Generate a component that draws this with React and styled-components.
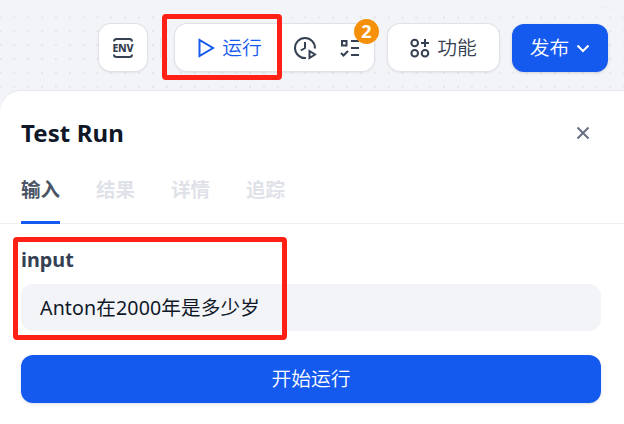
import React from "react";
import styled, { createGlobalStyle } from "styled-components";

const Global = createGlobalStyle`
  * { box-sizing: border-box; }
  body { margin: 0; overflow: hidden; font-family: "Noto Sans", "Noto Sans CJK SC", sans-serif; }
  button { font: inherit; border: 0; padding: 0; }
`;

const Page = styled.div`
  position: relative;
  display: flex;
  flex-direction: column;
  width: 624px;
  height: 424px;
  background: #f2f4f7;
  overflow: hidden;
`;

const Toolbar = styled.header`
  position: relative;
  flex: none;
  display: flex;
  align-items: flex-start;
  height: 91px;
  padding: 24px 0 0 99px;
  background-image:
    linear-gradient(#f2f4f7, #f2f4f7),
    radial-gradient(circle, #e3e5ea 0.9px, transparent 1.5px);
  background-size: 100% 12px, 13.86px 13.86px;
  background-position: 0 0, -6.4px 10.5px;
  background-repeat: no-repeat, repeat;

  /* rounded edge of the canvas behind the toolbar */
  &::after {
    content: "";
    position: absolute;
    top: 6px;
    right: 0;
    width: 24px;
    height: 24px;
    border-top: 1px solid #eceef2;
    border-top-right-radius: 22px;
    pointer-events: none;
  }
`;

const Group = styled.div`
  position: relative;
  display: flex;
  align-items: center;
  width: ${(p) => p.$width}px;
  height: 47px;
  margin-right: ${(p) => p.$after || 0}px;
  border-radius: 12px;
  background: #fff;
  box-shadow: 0 0 0 1px #e0e2e7, 0 1px 3px rgba(16, 24, 40, 0.12);
  color: #354052;
`;

const Item = styled.button`
  display: flex;
  align-items: center;
  justify-content: center;
  height: 47px;
  width: ${(p) => p.$width}px;
  gap: 7px;
  background: none;
  color: ${(p) => p.$color || "#354052"};
  font-size: 19.8px;
  line-height: 28px;
  font-weight: 350;
  white-space: nowrap;
  svg { flex: none; }
`;

const Divider = styled.i`
  width: 1px;
  height: 20px;
  margin: 14px 14px 0 13px;
  background: #e3e5ea;
`;

const Badge = styled.span`
  position: absolute;
  top: -5px;
  right: -5px;
  width: 25px;
  height: 25px;
  border-radius: 50%;
  background: #f79009;
  color: #fff;
  font-size: 18px;
  font-weight: 700;
  line-height: 24px;
  text-align: center;
`;

const Publish = styled(Item)`
  height: 48px;
  border-radius: 12px;
  background: #155aef;
  color: #fff;
  box-shadow: 0 1px 3px rgba(16, 24, 40, 0.15);
`;

const Panel = styled.main`
  flex: 1;
  display: flex;
  flex-direction: column;
  border-radius: 21px 0 0 0;
  background: #fff;
  box-shadow: 0 -1px 1px #e6e8ec;
`;

const Heading = styled.div`
  display: flex;
  align-items: center;
  justify-content: space-between;
  height: 84px;
  padding: 0 34px 0 21px;
  color: #676f83;
`;

const Title = styled.h1`
  margin: 0;
  color: #101828;
  font-size: 24px;
  font-weight: 700;
  line-height: 32px;
  letter-spacing: 0.1px;
`;

const Tabs = styled.nav`
  display: flex;
  gap: 36px;
  height: 49px;
  padding-left: 21px;
  border-bottom: 1px solid #eeeff2;
`;

const Tab = styled.button`
  height: 49px;
  padding-bottom: 16px;
  background: none;
  border-bottom: 3px solid ${(p) => (p.$active ? "#155aef" : "transparent")};
  color: ${(p) => (p.$active ? "#495464" : "#dfe2e8")};
  font-size: 19.5px;
  font-weight: 700;
  line-height: 28px;
`;

const Form = styled.form`
  display: flex;
  flex-direction: column;
  padding: 22px 23px 0 21px;
`;

const Label = styled.label`
  height: 38px;
  color: #354052;
  font-size: 19.8px;
  font-weight: 700;
  line-height: 28px;
`;

const Field = styled.div`
  height: 47px;
  margin-bottom: 24px;
  padding-left: 19px;
  border-radius: 12px;
  background: #f2f4f7;
  color: #101828;
  font-size: 19.6px;
  line-height: 47px;
  font-weight: 400;
  letter-spacing: 0.12px;
`;

const Start = styled(Publish)`
  width: 580px;
`;

const EnvText = styled.text`
  font-family: "Noto Sans", sans-serif;
  font-size: 10.5px;
  font-weight: 800;
`;

const Highlight = styled.div`
  position: absolute;
  left: ${(p) => p.$x}px;
  top: ${(p) => p.$y}px;
  width: ${(p) => p.$w}px;
  height: ${(p) => p.$h}px;
  border: 5px solid #ff2116;
  border-radius: 4px;
  pointer-events: none;
`;

const stroke = { fill: "none", stroke: "currentColor", strokeWidth: 2 };

const EnvIcon = () => (
  <svg width="22" height="22" viewBox="0 0 22 22" {...stroke}>
    <path d="M2 4.500C2 2.800 3 2 4.500 2h13C19 2 20 2.800 20 4.500M2 17.500C2 19.200 3 20 4.500 20h13c1.500 0 2.500-.8 2.500-2.500" />
    <EnvText x="0.500" y="14.800" textLength="21" fill="currentColor" stroke="none">ENV</EnvText>
  </svg>
);
const PlayIcon = () => (
  <svg width="18" height="20" viewBox="0 0 18 20" {...stroke}>
    <path d="M2.500 2v16L16 10z" />
  </svg>
);
const HistoryIcon = () => (
  <svg width="24" height="24" viewBox="0 0 24 24" {...stroke}>
    <path d="M13 22A10 10 0 1 1 22 12.500M12 6v6l-4.200 2.500M16.500 15v7l5.500-3.500z" />
  </svg>
);
const ChecklistIcon = () => (
  <svg width="20" height="20" viewBox="0 0 20 20" {...stroke}>
    <path d="M2 3h4.500v4.500H2zM11 3h8M11 10h8M11 17h8M1 15l2.500 2.500L8 13" />
  </svg>
);
const FeaturesIcon = () => (
  <svg width="20" height="20" viewBox="0 0 20 20" {...stroke}>
    <circle cx="4.700" cy="5" r="3.300" />
    <circle cx="4.700" cy="15.300" r="3.300" />
    <circle cx="15" cy="15.300" r="3.300" />
    <path d="M15 1v8M11 5h8" />
  </svg>
);

const tabs = ["输入", "结果", "详情", "追踪"];

export default function App() {
  return (
    <Page>
      <Global />
      <Toolbar>
        <Group $width={48}><Item $width={48} aria-label="ENV"><EnvIcon /></Item></Group>
        <Divider />
        <Group $width={199} $after={14}>
          <Item $width={109} $color="#155aef"><PlayIcon />运行</Item>
          <Item $width={42}><HistoryIcon /></Item>
          <Item $width={47}><ChecklistIcon /></Item>
          <Badge>2</Badge>
        </Group>
        <Group $width={111} $after={13}><Item $width={114}><FeaturesIcon />功能</Item></Group>
        <Publish $width={96}>
          发布
          <svg width="14" height="14" viewBox="0 0 14 14" {...stroke}><path d="M1.500 4.500 7 10l5.500-5.500" /></svg>
        </Publish>
      </Toolbar>
      <Panel>
        <Heading>
          <Title>Test Run</Title>
          <svg width="14" height="14" viewBox="0 0 14 14" {...stroke}><path d="m1.500 1.500 11 11m0-11-11 11" /></svg>
        </Heading>
        <Tabs>{tabs.map((t, i) => <Tab key={t} $active={i === 0}>{t}</Tab>)}</Tabs>
        <Form>
          <Label>input</Label>
          <Field>Anton在2000年是多少岁</Field>
          <Start type="button" $width={580}>开始运行</Start>
        </Form>
      </Panel>
      <Highlight $x={162} $y={14} $w={120} $h={66} />
      <Highlight $x={13} $y={237} $w={274} $h={103} />
    </Page>
  );
}
